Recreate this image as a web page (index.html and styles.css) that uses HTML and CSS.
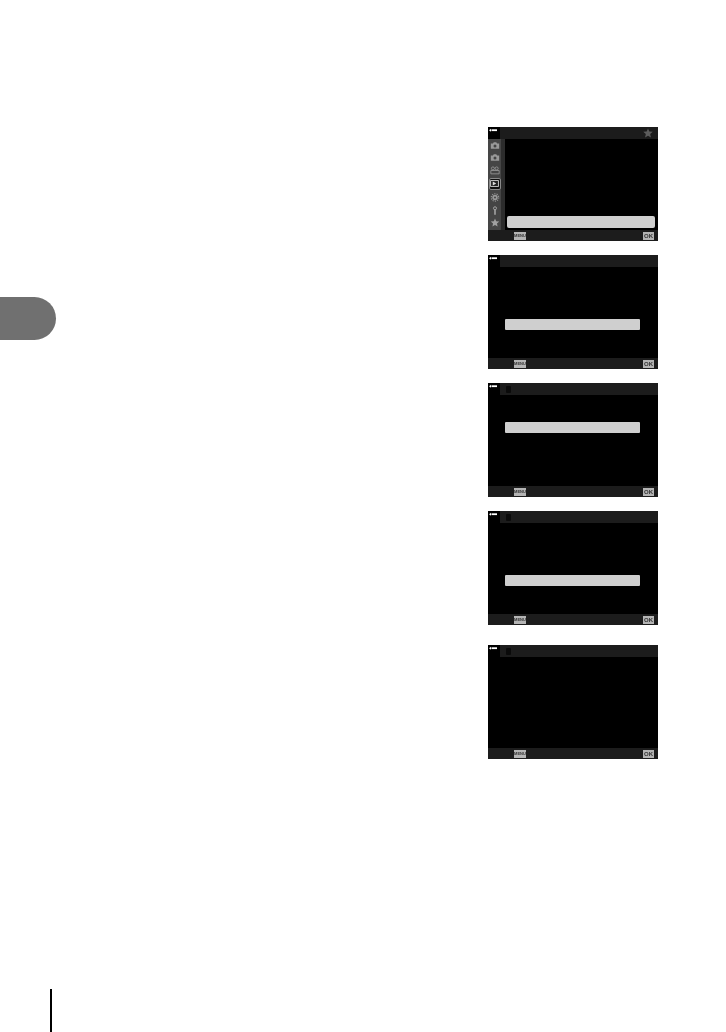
FILE: index.html
```html
<!DOCTYPE html>
<html lang="en">
<head>
<meta charset="utf-8">
<title>Camera manual page</title>
<link rel="stylesheet" href="styles.css">
</head>
<body>
<main class="page">
  <aside class="margin">
    <div class="tab"></div>
    <div class="rule"></div>
  </aside>
  <section class="screens">
    <div class="screen screen-menu">
      <header class="head">
        <svg class="back" viewBox="0 0 12 12"><path d="M1 3.200 3 1.700V4.700Z" fill="#fff"/><path d="M3.500 2.300h5.500v1.800H3.500z" fill="#fff"/></svg>
        <svg class="star" viewBox="0 0 12 12"><path d="M6 .5 7.600 4.300 11.700 4.600 8.600 7.300 9.500 11.400 6 9.200 2.500 11.400 3.400 7.300.3 4.600 4.400 4.300Z" fill="#5c5c5c"/></svg>
      </header>
      <div class="body">
        <nav class="side">
          <svg class="ic" viewBox="0 0 12 10"><path d="M1 2.500h2.500L4.500 1h3l1 1.500H11V9H1Z" fill="#999"/><circle cx="6" cy="5.500" r="1.800" fill="#444"/></svg>
          <svg class="ic" viewBox="0 0 12 10"><path d="M1 2.500h2.500L4.500 1h3l1 1.500H11V9H1Z" fill="#999"/><circle cx="6" cy="5.500" r="1.800" fill="#444"/></svg>
          <svg class="ic" viewBox="0 0 12 10"><circle cx="3.500" cy="2.500" r="1.800" fill="none" stroke="#999"/><circle cx="8" cy="2.500" r="1.800" fill="none" stroke="#999"/><path d="M1 5h10v4H1Z" fill="none" stroke="#999"/></svg>
          <div class="active"><svg class="ic-play" viewBox="0 0 10 8"><path d="M.5.500h9v7h-9Z" fill="#222" stroke="#ddd"/><path d="M3 1.800 7 4 3 6.200Z" fill="#ddd"/></svg></div>
          <svg class="ic" viewBox="0 0 12 12"><circle cx="6" cy="6" r="3.600" fill="#999"/><circle cx="6" cy="6" r="5" fill="none" stroke="#999" stroke-width="1.400" stroke-dasharray="1.600 1.540"/><circle cx="6" cy="6" r="1.300" fill="#444"/></svg>
          <svg class="ic" viewBox="0 0 12 12"><circle cx="6" cy="3" r="2" fill="none" stroke="#aaa" stroke-width="1.200"/><path d="M5 5h2v6.500H5Z" fill="#aaa"/></svg>
          <svg class="ic" viewBox="0 0 12 12"><path d="M6 .5 7.600 4.300 11.700 4.600 8.600 7.300 9.500 11.400 6 9.200 2.500 11.400 3.400 7.300.3 4.600 4.400 4.300Z" fill="#a0a0a0"/></svg>
        </nav>
        <div class="band"></div>
        <div class="list"><div class="bar bar-wide"></div></div>
      </div>
      <footer class="foot"><span class="key key-menu">MENU</span><span class="key key-ok">OK</span></footer>
    </div>

    <div class="screen">
      <header class="head"><svg class="back" viewBox="0 0 12 12"><path d="M1 3.200 3 1.700V4.700Z" fill="#fff"/><path d="M3.500 2.300h5.500v1.800H3.500z" fill="#fff"/></svg></header>
      <div class="body plain at-64"><div class="bar"></div></div>
      <footer class="foot"><span class="key key-menu">MENU</span><span class="key key-ok">OK</span></footer>
    </div>

    <div class="screen">
      <header class="head"><svg class="back" viewBox="0 0 12 12"><path d="M1 3.200 3 1.700V4.700Z" fill="#fff"/><path d="M3.500 2.300h5.500v1.800H3.500z" fill="#fff"/></svg><span class="mark"></span></header>
      <div class="body plain at-39"><div class="bar"></div></div>
      <footer class="foot"><span class="key key-menu">MENU</span><span class="key key-ok">OK</span></footer>
    </div>

    <div class="screen">
      <header class="head"><svg class="back" viewBox="0 0 12 12"><path d="M1 3.200 3 1.700V4.700Z" fill="#fff"/><path d="M3.500 2.300h5.500v1.800H3.500z" fill="#fff"/></svg><span class="mark"></span></header>
      <div class="body plain at-64"><div class="bar"></div></div>
      <footer class="foot"><span class="key key-menu">MENU</span><span class="key key-ok">OK</span></footer>
    </div>

    <div class="screen screen-last">
      <header class="head"><svg class="back" viewBox="0 0 12 12"><path d="M1 3.200 3 1.700V4.700Z" fill="#fff"/><path d="M3.500 2.300h5.500v1.800H3.500z" fill="#fff"/></svg><span class="mark"></span></header>
      <div class="body plain"></div>
      <footer class="foot"><span class="key key-menu">MENU</span><span class="key key-ok">OK</span></footer>
    </div>
  </section>
</main>
</body>
</html>
```
FILE: styles.css
```css
* { box-sizing: border-box; }
html, body { margin: 0; padding: 0; background: #fff; }
.page {
  width: 726px;
  height: 1032px;
  display: flex;
  overflow: hidden;
  font-family: "Liberation Sans", Arial, sans-serif;
}
.margin {
  width: 488px;
  display: flex;
  flex-direction: column;
}
.tab {
  width: 56px;
  height: 43px;
  margin-top: 297px;
  background: #707070;
  border-radius: 0 22px 22px 0;
}
.rule {
  width: 2px;
  height: 43px;
  margin-top: auto;
  margin-left: 50px;
  background: #000;
}
.screens {
  display: flex;
  flex-direction: column;
  gap: 14px;
  padding-top: 127px;
}
.screen {
  width: 170px;
  height: 114px;
  display: flex;
  flex-direction: column;
  background: #000;
  filter: blur(0.4px);
}
.screen-last { margin-top: 6px; }
.head {
  height: 12px;
  flex: none;
  display: flex;
  align-items: center;
  padding: 0 5px 0 0;
  background: #1c1c1c;
}
.back {
  width: 12px;
  height: 12px;
  flex: none;
  background: #000;
}
.star { width: 10px; height: 10px; margin-left: auto; }
.mark {
  width: 5px;
  height: 7px;
  margin-left: 6px;
  background: #0a0a0a;
  border-radius: 1px;
}
.body {
  flex: 1;
  min-height: 0;
  display: flex;
  background: #000;
}
.plain {
  display: block;
  padding: 0 18px 0 17px;
}
.at-64 { padding-top: 52px; }
.at-39 { padding-top: 27px; }
.side {
  width: 13px;
  flex: none;
  display: flex;
  flex-direction: column;
  align-items: center;
  justify-content: space-between;
  padding: 2px 0 3px;
  background: #454545;
}
.ic { width: 10px; height: 9px; display: block; }
.active {
  width: 12px;
  height: 12px;
  display: flex;
  align-items: center;
  justify-content: center;
  background: #111;
  border: 1px solid #8a8a8a;
  border-radius: 2px;
}
.ic-play { width: 9px; height: 7px; display: block; }
.band { width: 4px; flex: none; background: #2c2c2c; }
.list {
  flex: 1;
  display: flex;
  align-items: flex-end;
  padding: 0 3px 2px 2px;
}
.bar {
  height: 11px;
  background: #cfcfcf;
  border-radius: 1px;
}
.bar-wide { width: 100%; height: 12px; border-radius: 2px; }
.foot {
  height: 11px;
  flex: none;
  display: flex;
  align-items: center;
  padding: 0 4px 0 26px;
  background: #1c1c1c;
}
.key {
  height: 8px;
  display: block;
  line-height: 8px;
  font-weight: 700;
  text-align: center;
  color: #333;
  background: #b4b4b4;
}
.key-menu { width: 12px; font-size: 4px; }
.key-ok { width: 11px; margin-left: auto; font-size: 6px; }
```
